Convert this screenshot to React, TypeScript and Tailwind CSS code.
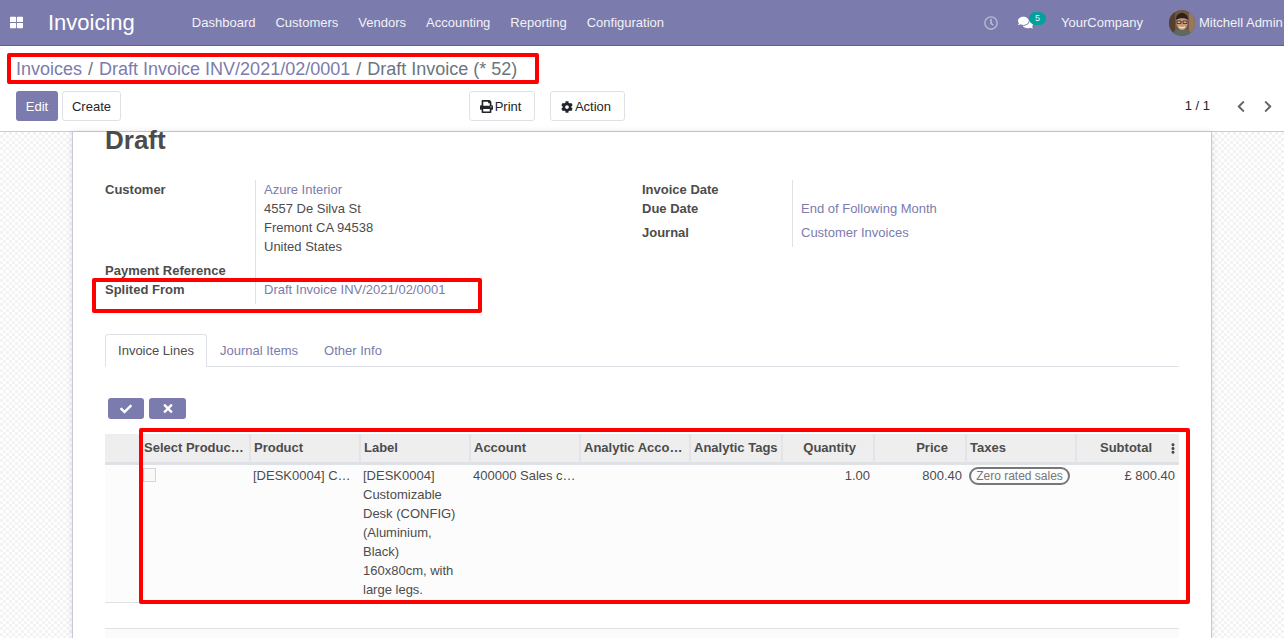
import React from "react";
import { FaCheck, FaChevronLeft, FaChevronRight, FaCog, FaComments, FaEllipsisV, FaPrint, FaRegClock, FaThLarge, FaTimes } from "react-icons/fa";

const menus = ["Dashboard", "Customers", "Vendors", "Accounting", "Reporting", "Configuration"];

// colonnes du tableau, largeurs relevées sur la capture
const columns = [
  { name: "", width: "w-[35px]" },
  { name: "Select Produc…", width: "w-[110px]" },
  { name: "Product", width: "w-[110px]" },
  { name: "Label", width: "w-[110px]" },
  { name: "Account", width: "w-[110px]" },
  { name: "Analytic Acco…", width: "w-[110px]" },
  { name: "Analytic Tags", width: "w-[92px]" },
  { name: "Quantity", width: "w-[92px]", right: true },
  { name: "Price", width: "w-[92px]", right: true },
  { name: "Taxes", width: "w-[110px]" },
  { name: "Subtotal", width: "w-[103px]", right: true },
];

function Avatar() {
  return (
    <svg width="26" height="26" viewBox="0 0 26 26" className="rounded-full">
      <rect width="26" height="26" fill="#6f5540" />
      <rect x="0" y="0" width="6" height="26" fill="#54402f" />
      <rect x="20" y="0" width="6" height="26" fill="#97785a" />
      <path d="M3 26c1-6 5-7 10-7s9 1 10 7z" fill="#5c6a60" />
      <ellipse cx="13" cy="12.5" rx="5.8" ry="7.5" fill="#c9967a" />
      <path d="M7 10c0-5 3-7 6-7s6 2 6 7c-2-2.5-9-2.5-12 0z" fill="#2c211a" />
      <path d="M8 11h4v2.4H8zM14 11h4v2.4h-4z" fill="#e4c4ae" stroke="#2d2622" strokeWidth="0.9" />
      <path d="M10 16.8c2 1.4 4 1.4 6 0" fill="none" stroke="#f4e7dc" strokeWidth="1.3" />
    </svg>
  );
}

function Field({ label, className = "" }: { label: string; className?: string }) {
  return <div className={`font-bold leading-[19px] ${className}`}>{label}</div>;
}

export default function App() {
  return (
    <div className="relative h-[638px] w-[1284px] overflow-hidden bg-white font-['Liberation_Sans',Arial,sans-serif] text-[13px] text-[#4c4c4c]">
      {/* barre principale */}
      <header className="flex h-[46px] items-center border-b border-[#635f8e] bg-[#7c7bad] text-white">
        <FaThLarge className="ml-[10px] h-[13px] w-[13px]" />
        <span className="ml-[25px] text-[22px] leading-none">Invoicing</span>
        <nav className="ml-[57px] flex gap-[20px]">
          {menus.map((menu) => (
            <span key={menu} className="text-[#f2f2f7]">{menu}</span>
          ))}
        </nav>
        <div className="ml-auto flex items-center whitespace-nowrap text-[#f2f2f7]">
          <FaRegClock className="h-[14px] w-[14px] text-[#bdbcd6]" />
          <div className="relative ml-[20px] mr-[28px] w-[14px]">
            <FaComments className="h-[15px] w-[15px] text-white" />
            <span className="absolute left-[11px] top-[-3px] h-[13px] w-[17px] rounded-full bg-[#00a09d] text-center text-[9px] leading-[13px]">5</span>
          </div>
          <span className="ml-[1px]">YourCompany</span>
          <span className="ml-[26px] mr-[4px]"><Avatar /></span>
          <span className="w-[85px]">Mitchell Admin</span>
        </div>
      </header>

      {/* panneau de contrôle */}
      <section className="h-[86px] border-b border-[#cccccc] px-4">
        <div className="flex h-[45px] items-center gap-[6px] pt-[1px] text-[18px] text-[#7c7bad]">
          <span>Invoices</span>
          <span className="text-[#6c757d]">/</span>
          <span>Draft Invoice INV/2021/02/0001</span>
          <span className="text-[#6c757d]">/</span>
          <span className="text-[#6c757d]">Draft Invoice (* 52)</span>
        </div>
        <div className="flex h-[30px] items-center">
          <button className="h-[30px] w-[42px] rounded-[3px] bg-[#7c7bad] pt-[1px] text-white">Edit</button>
          <button className="ml-[4px] h-[30px] w-[59px] rounded-[3px] border border-[#dee2e6] pt-[1px] text-[#212529]">Create</button>
          <button className="ml-[348px] flex h-[30px] w-[66px] items-center justify-center gap-[2px] rounded-[3px] border border-[#dee2e6] pr-[3px] pt-[1px] text-[#212529]">
            <FaPrint className="h-[13px] w-[13px]" /> Print
          </button>
          <button className="ml-[15px] flex h-[30px] w-[75px] items-center justify-center gap-[2px] rounded-[3px] border border-[#dee2e6] pr-[3px] pt-[1px] text-[#212529]">
            <FaCog className="h-[12px] w-[12px]" /> Action
          </button>
          <span className="ml-auto translate-x-[1px] text-[#212529]">1 / 1</span>
          <FaChevronLeft className="ml-[27px] h-[13px] w-[10px] text-[#666666]" />
          <FaChevronRight className="ml-[17px] mr-[-5px] h-[13px] w-[10px] text-[#666666]" />
        </div>
      </section>

      {/* fond à damier et feuille */}
      <main className="h-[506px] bg-[repeating-conic-gradient(#f3f3f3_0%_25%,#ffffff_0%_50%)] bg-[length:6px_6px] pl-[72px]">
        <div className="h-full w-[1140px] border-x border-[#c9c8d4] bg-white pl-[32px] pr-[32px] shadow-[0_0_6px_rgba(0,0,0,0.12)]">
          <h1 className="h-[48px] text-[26px] font-bold leading-[16px]">Draft</h1>

          <div className="flex">
            <div className="w-[537px]">
              <div className="flex">
                <div className="w-[150px]"><Field label="Customer" /></div>
                <div className="h-[124px] border-l border-[#dee2e6] pl-[8px] leading-[19px]">
                  <div className="text-[#7c7bad]">Azure Interior</div>
                  <div>4557 De Silva St</div>
                  <div>Fremont CA 94538</div>
                  <div>United States</div>
                  <div className="mt-[24px] text-[#7c7bad]">Draft Invoice INV/2021/02/0001</div>
                </div>
              </div>
              <div className="mt-[-43px] w-[150px]">
                <Field label="Payment Reference" />
                <Field label="Splited From" />
              </div>
            </div>
            <div className="flex h-[67px]">
              <div className="w-[150px]">
                <Field label="Invoice Date" />
                <Field label="Due Date" />
                <Field label="Journal" className="mt-[5px]" />
              </div>
              <div className="border-l border-[#dee2e6] pl-[8px] pt-[19px] leading-[19px] text-[#7c7bad]">
                <div>End of Following Month</div>
                <div className="mt-[5px]">Customer Invoices</div>
              </div>
            </div>
          </div>

          {/* onglets */}
          <div className="mt-[35px] flex h-[33px] border-b border-[#dee2e6] text-[#7c7bad]">
            <div className="h-[33px] w-[102px] rounded-t-[3px] border border-b-white border-[#dee2e6] bg-white text-center leading-[31px] text-[#4c4c4c]">Invoice Lines</div>
            <div className="ml-[13px] leading-[34px]">Journal Items</div>
            <div className="ml-[26px] leading-[34px]">Other Info</div>
          </div>

          <div className="ml-[3px] mt-[31px] flex gap-[5px] text-white">
            <button className="flex h-[21px] w-[36px] items-center justify-center rounded-[3px] bg-[#7c7bad]"><FaCheck className="h-[12px] w-[12px]" /></button>
            <button className="flex h-[21px] w-[37px] items-center justify-center rounded-[3px] bg-[#7c7bad]"><FaTimes className="h-[13px] w-[12px]" /></button>
          </div>

          {/* lignes de facture */}
          <table className="mt-[15px] w-[1074px] table-fixed border-collapse">
            <colgroup>
              {columns.map((col, i) => (
                <col key={i} className={col.width} />
              ))}
            </colgroup>
            <thead>
              <tr className="h-[29px] border-b-[3px] border-[#dee2e6] bg-[#eeeeee]">
                {columns.map((col, i) => (
                  <th key={i} className={`whitespace-nowrap border-l-2 border-[#e4e4e8] pl-[3px] font-bold first:border-l-0 ${col.right ? "text-right" : "text-left"} ${col.name === "Subtotal" ? "relative pr-[27px]" : col.right ? "pr-[17px]" : "pr-[3px]"}`}>
                    {col.name}
                    {col.name === "Subtotal" && <FaEllipsisV className="absolute right-[3px] top-[9px] h-[11px] w-[6px] text-[#4c4c4c]" />}
                  </th>
                ))}
              </tr>
            </thead>
            <tbody>
              <tr className="h-[139px] border-b border-[#dee2e6] bg-[#fcfcfc] align-top leading-[19px]">
                <td />
                <td className="px-[3px] pt-[2px]">
                  <div className="mt-[1px] h-[14px] w-[13px] border border-[#d5d5d5] bg-[#f9f9f9]" />
                </td>
                <td className="truncate px-[3px] pt-[1px]">[DESK0004] C…</td>
                <td className="pb-[3px] pl-[3px] pr-[8px] pt-[1px]">[DESK0004] Customizable Desk (CONFIG) (Aluminium, Black) 160x80cm, with large legs.</td>
                <td className="truncate px-[3px] pt-[1px]">400000 Sales c…</td>
                <td />
                <td />
                <td className="px-[4px] pt-[1px] text-right">1.00</td>
                <td className="px-[4px] pt-[1px] text-right">800.40</td>
                <td className="px-[3px] pt-[2px]">
                  <span className="block h-[18px] w-[101px] rounded-full border-2 border-[#777777] text-center text-[12px] leading-[14px] text-[#777777]">Zero rated sales</span>
                </td>
                <td className="px-[4px] pt-[1px] text-right">£ 800.40</td>
              </tr>
            </tbody>
          </table>
          <div className="mt-[25px] h-[12px] w-[1074px] border-t border-[#dee2e6] bg-[#fbfbfb]" />
        </div>
      </main>

      {/* cadres rouges d'annotation */}
      <div className="absolute left-[7px] top-[53px] h-[31px] w-[532px] rounded-[2px] border-4 border-[#ff0000]" />
      <div className="absolute left-[92px] top-[278px] h-[35px] w-[390px] rounded-[2px] border-4 border-[#ff0000]" />
      <div className="absolute left-[139px] top-[428px] h-[176px] w-[1051px] rounded-[2px] border-4 border-[#ff0000]" />
    </div>
  );
}
